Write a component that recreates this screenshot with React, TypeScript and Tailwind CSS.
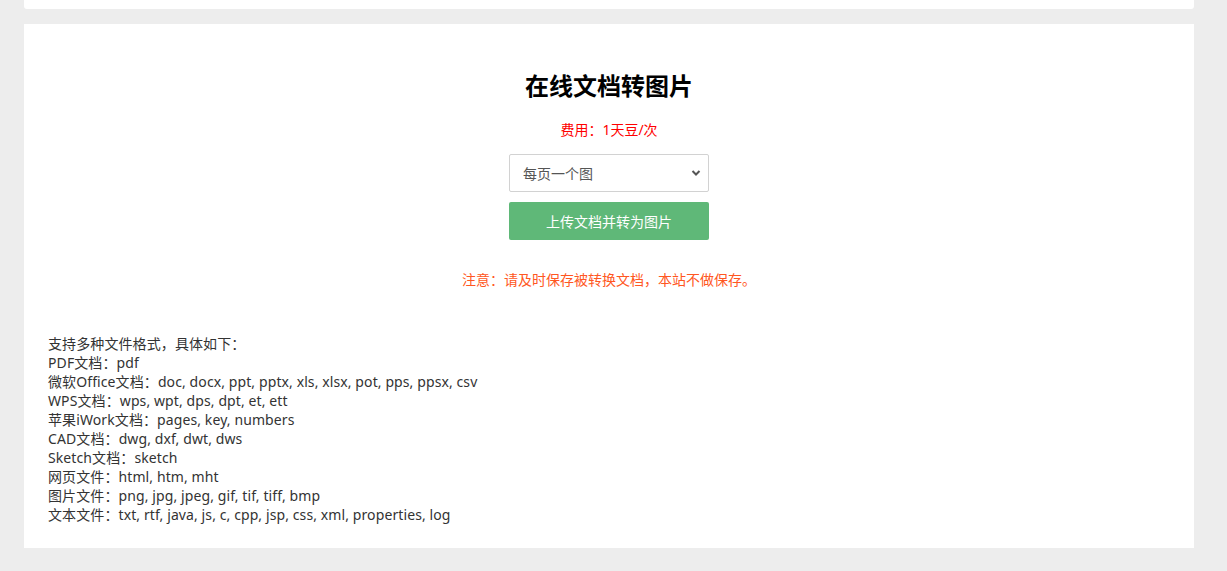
import { useState } from "react"

const formats: [string, string][] = [
  ["PDF文档", "pdf"],
  ["微软Office文档", "doc, docx, ppt, pptx, xls, xlsx, pot, pps, ppsx, csv"],
  ["WPS文档", "wps, wpt, dps, dpt, et, ett"],
  ["苹果iWork文档", "pages, key, numbers"],
  ["CAD文档", "dwg, dxf, dwt, dws"],
  ["Sketch文档", "sketch"],
  ["网页文件", "html, htm, mht"],
  ["图片文件", "png, jpg, jpeg, gif, tif, tiff, bmp"],
  ["文本文件", "txt, rtf, java, js, c, cpp, jsp, css, xml, properties, log"]
]

export default function App() {
  const [mode, setMode] = useState("one")

  return (
    <div
      className="min-h-[571px] bg-[#ededed] pl-[24px] pr-[33px] pb-[23px] text-[14px] text-[#333]"
      style={{ fontFamily: '"Noto Sans", "Noto Sans CJK SC", sans-serif' }}
    >
      {/* previous card, scrolled off */}
      <div className="h-[9px] rounded-b-[3px] bg-white" />

      <div className="mt-[15px] bg-white px-[24px] pb-[24px]">
        <h1 className="pt-[46px] text-center text-[24px] font-bold leading-[32px] text-black">在线文档转图片</h1>
        <p className="mt-[18px] text-center leading-[20px] text-[#ff0000]">费用：1天豆/次</p>

        <div className="mt-[14px] flex flex-col items-center">
          <div className="relative w-[200px]">
            <select
              value={mode}
              onChange={(e) => setMode(e.target.value)}
              className="h-[38px] w-full appearance-none rounded-[2px] border border-[#d2d2d2] bg-white pl-[13px] pr-[30px] text-[14px] text-[#555] outline-none"
            >
              <option value="one">每页一个图</option>
              <option value="long">所有页合成一张长图</option>
            </select>
            <svg
              className="pointer-events-none absolute right-[8px] top-[15px]"
              width="10"
              height="8"
              viewBox="0 0 10 8"
              fill="none"
            >
              <path d="M1.5 2 L5 5.5 L8.5 2" stroke="#555" strokeWidth="2" />
            </svg>
          </div>

          <button className="mt-[10px] h-[38px] w-[200px] rounded-[2px] bg-[#5fb878] text-[14px] text-white hover:opacity-90">
            上传文档并转为图片
          </button>
        </div>

        <p className="mt-[30px] text-center leading-[20px] text-[#ff5722]">注意：请及时保存被转换文档，本站不做保存。</p>

        <div className="mt-[44px] leading-[19px] tracking-[0.1px]">
          <div>支持多种文件格式，具体如下：</div>
          {formats.map(([name, ext]) => (
            <div key={name}>
              {name}：{ext}
            </div>
          ))}
        </div>
      </div>
    </div>
  )
}
